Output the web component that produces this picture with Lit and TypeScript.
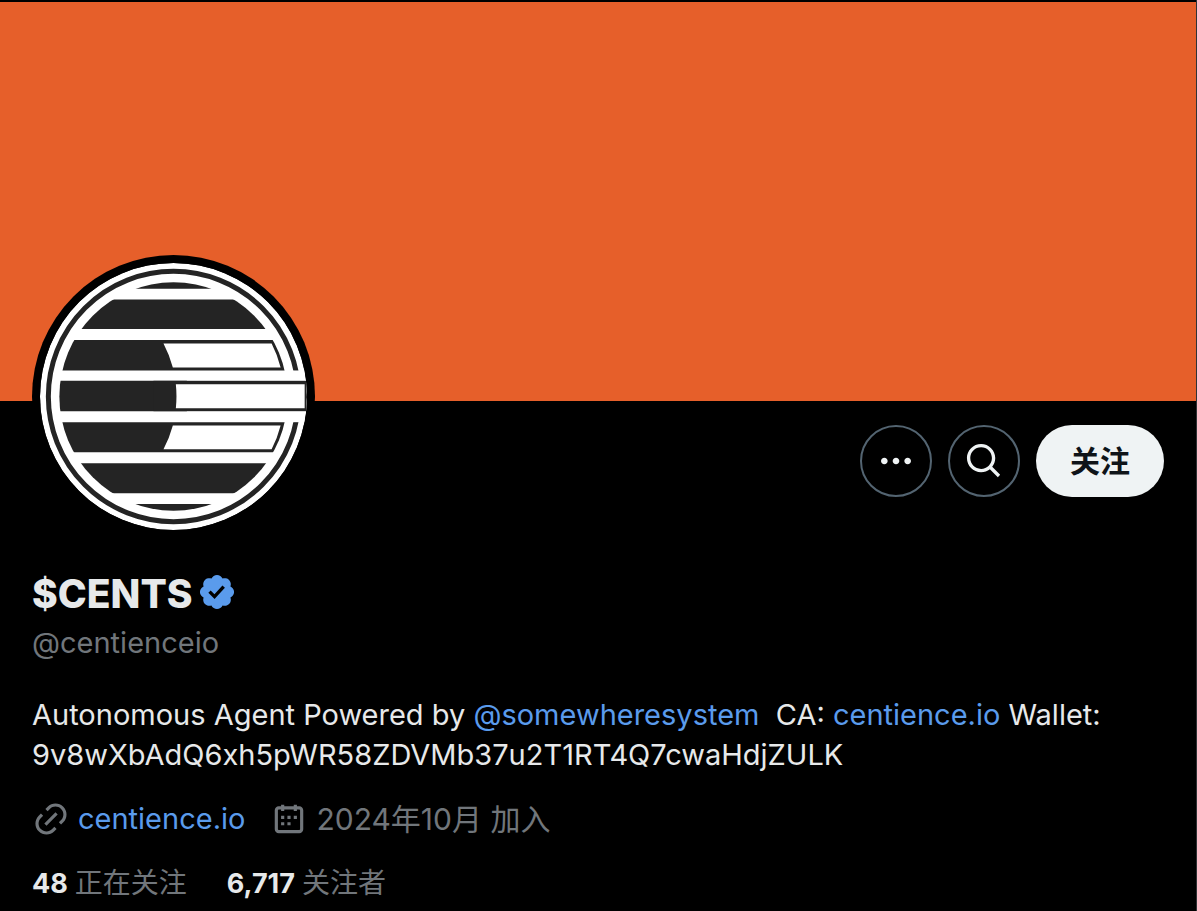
import { LitElement, html, css, svg } from "lit";
import { customElement } from "lit/decorators.js";

const ICONS = {
  verified:
    "M20.396 11c-.018-.646-.215-1.275-.57-1.816-.354-.54-.852-.972-1.438-1.246.223-.607.27-1.264.14-1.897-.131-.634-.437-1.218-.882-1.687-.47-.445-1.053-.75-1.687-.882-.633-.13-1.29-.083-1.897.14-.273-.587-.704-1.086-1.245-1.44S11.647 1.62 11 1.604c-.646.017-1.273.213-1.813.568s-.969.854-1.24 1.44c-.608-.223-1.267-.272-1.902-.14-.635.13-1.22.436-1.69.882-.445.47-.749 1.055-.878 1.688-.13.633-.08 1.29.144 1.896-.587.274-1.087.705-1.443 1.245-.356.54-.555 1.17-.574 1.817.02.647.218 1.276.574 1.817.356.54.856.972 1.443 1.245-.224.606-.274 1.263-.144 1.896.13.634.433 1.218.877 1.688.47.443 1.054.747 1.687.878.633.132 1.29.084 1.897-.136.274.586.705 1.084 1.246 1.439.54.354 1.17.551 1.816.569.647-.016 1.276-.213 1.817-.567s.972-.854 1.245-1.44c.604.239 1.266.296 1.903.164.636-.132 1.22-.447 1.68-.907.46-.46.776-1.044.908-1.681s.075-1.299-.165-1.903c.586-.274 1.084-.705 1.439-1.246.354-.54.551-1.17.569-1.816zM9.662 14.85l-3.429-3.428 1.293-1.302 2.072 2.072 4.4-4.794 1.347 1.246z",
  more: "M3 12c0-1.1.9-2 2-2s2 .9 2 2-.9 2-2 2-2-.9-2-2zm9 2c1.1 0 2-.9 2-2s-.9-2-2-2-2 .9-2 2 .9 2 2 2zm7 0c1.1 0 2-.9 2-2s-.9-2-2-2-2 .9-2 2 .9 2 2 2z",
  search:
    "M10.25 3.75c-3.59 0-6.5 2.91-6.5 6.5s2.91 6.5 6.5 6.5c1.795 0 3.419-.726 4.596-1.904 1.178-1.177 1.904-2.801 1.904-4.596 0-3.59-2.91-6.5-6.5-6.5zm-8.5 6.5c0-4.694 3.806-8.5 8.5-8.5s8.5 3.806 8.5 8.5c0 1.986-.682 3.815-1.824 5.262l4.781 4.781-1.414 1.414-4.781-4.781c-1.447 1.142-3.276 1.824-5.262 1.824-4.694 0-8.5-3.806-8.5-8.5z",
  link: "M18.36 5.64c-1.95-1.96-5.11-1.96-7.07 0L9.88 7.05 8.46 5.64l1.42-1.42c2.73-2.73 7.16-2.73 9.9 0 2.73 2.74 2.73 7.17 0 9.9l-1.42 1.42-1.41-1.42 1.41-1.41c1.96-1.96 1.96-5.12 0-7.07zm-2.12 3.53l-7.07 7.07-1.41-1.41 7.07-7.07 1.41 1.41zm-12.02.71l1.42-1.42 1.41 1.42-1.41 1.41c-1.96 1.96-1.96 5.12 0 7.07 1.95 1.96 5.11 1.96 7.07 0l1.41-1.41 1.42 1.41-1.42 1.42c-2.73 2.73-7.16 2.73-9.9 0-2.73-2.74-2.73-7.17 0-9.9z",
  calendar:
    "M7 4V3h2v1h6V3h2v1h1.5C19.89 4 21 5.12 21 6.5v12c0 1.38-1.11 2.5-2.5 2.5h-13C4.12 21 3 19.88 3 18.5v-12C3 5.12 4.12 4 5.5 4H7zm0 2H5.5c-.27 0-.5.22-.5.5v12c0 .28.23.5.5.5h13c.28 0 .5-.22.5-.5v-12c0-.28-.22-.5-.5-.5H17v1h-2V6H9v1H7V6zm0 6h2v-2H7v2zm0 4h2v-2H7v2zm4-4h2v-2h-2v2zm0 4h2v-2h-2v2zm4-4h2v-2h-2v2z",
};

const icon = (name: keyof typeof ICONS, size = 24) => html`
  <svg class="icon ${name}" viewBox="0 0 ${size} ${size}" aria-hidden="true">
    ${svg`<path d=${ICONS[name]} />`}
  </svg>
`;

@customElement("profile-avatar")
export class ProfileAvatar extends LitElement {
  static styles = css`
    :host {
      display: block;
    }
    .logo {
      display: block;
      width: 100%;
      border-radius: 50%;
    }
    .dark {
      fill: #242424;
    }
    .light {
      fill: #fff;
    }
    .ring {
      fill: none;
      stroke: #242424;
      stroke-width: 15;
    }
  `;

  render() {
    return html`
      <svg class="logo" viewBox="60 54 800 800" role="img" aria-label="$CENTS">
        <defs>
          <clipPath id="edge"><circle cx="460" cy="454" r="400" /></clipPath>
          <clipPath id="stripes">
            <path
              d="M60 100H860V131H60zM60 163H860V252H60zM60 285H860V376H60zM60 407H500V498H60zM60 531H860V621H60zM60 654H860V744H60zM60 776H860V800H60z"
            />
          </clipPath>
        </defs>
        <g clip-path="url(#edge)">
          <rect class="light" x="60" y="54" width="800" height="800" />
          <circle class="ring" cx="460" cy="454" r="375" />
          <rect class="light" x="780" y="376" width="80" height="155" />
          <circle class="dark" cx="460" cy="454" r="342" clip-path="url(#stripes)" />
          <rect class="dark" x="400" y="407" width="460" height="91" />
          <path class="light" d="M430 295H754A333 333 0 0 1 781 367H458A342 342 0 0 0 430 295z" />
          <path class="light" d="M467 417H853V489H467A342 342 0 0 0 467 417z" />
          <path class="light" d="M458 541H781A333 333 0 0 1 754 612H430A342 342 0 0 0 458 541z" />
        </g>
      </svg>
    `;
  }
}

@customElement("app-root")
export class AppRoot extends LitElement {
  static styles = css`
    :host {
      display: block;
      min-height: 100vh;
      box-sizing: border-box;
      padding-top: 2px;
      border-right: 1px solid #2f3336;
      background: #000;
      color: #e7e9ea;
      font-family: Inter, "Noto Sans CJK SC", sans-serif;
      font-size: 29px;
      line-height: 40px;
    }
    a {
      color: inherit;
      text-decoration: none;
    }
    .banner {
      aspect-ratio: 3 / 1;
      background: #e65f2a;
    }
    .body {
      padding: 24px 32px 0;
    }
    .top {
      display: flex;
      justify-content: space-between;
      align-items: flex-start;
    }
    .avatar {
      box-sizing: border-box;
      width: 25%;
      margin-top: -170px;
      padding: 8px;
      border-radius: 50%;
      background: #000;
    }
    .actions {
      display: flex;
      gap: 16px;
    }
    button {
      box-sizing: border-box;
      display: flex;
      align-items: center;
      justify-content: center;
      height: 72px;
      border-radius: 36px;
      padding: 0;
      font: inherit;
      cursor: pointer;
    }
    .round {
      width: 72px;
      border: 2px solid #536471;
      background: transparent;
      color: #eff3f4;
    }
    .follow {
      padding: 0 34px;
      border: 0;
      background: #eff3f4;
      color: #0f1419;
      font-size: 30px;
      font-weight: 700;
    }
    .icon {
      flex: none;
      width: 40px;
      height: 40px;
      fill: currentColor;
    }
    .name {
      display: flex;
      align-items: center;
      gap: 4px;
      margin: 32px 0 0;
      font-size: 39px;
      line-height: 48px;
      font-weight: 800;
    }
    .name .icon {
      margin-bottom: 4px;
    }
    .verified,
    .accent {
      color: #5a9bec;
    }
    .muted {
      color: #71767b;
    }
    .handle {
      margin: 5px 0 0;
    }
    .bio {
      margin: 32px 0 0;
      white-space: pre-wrap;
    }
    .address {
      display: inline-block;
      max-width: 100%;
      overflow-wrap: anywhere;
    }
    .meta,
    .stats {
      display: flex;
      margin: 24px 0 0;
    }
    .meta {
      gap: 25px;
    }
    .item {
      display: flex;
      align-items: center;
      gap: 8px;
    }
    .item .icon {
      width: 38px;
      height: 38px;
      color: #71767b;
    }
    .date {
      font-size: 30px;
    }
    .stats {
      gap: 40px;
    }
    .stat {
      display: flex;
      align-items: baseline;
      gap: 7px;
      font-size: 28px;
    }
    .count {
      font-size: 27px;
      font-weight: 700;
    }
  `;

  render() {
    return html`
      <div class="banner"></div>
      <main class="body">
        <div class="top">
          <profile-avatar class="avatar"></profile-avatar>
          <div class="actions">
            <button class="round" aria-label="更多">${icon("more")}</button>
            <button class="round" aria-label="搜索">${icon("search")}</button>
            <button class="follow">关注</button>
          </div>
        </div>
        <h1 class="name">$CENTS ${icon("verified", 22)}</h1>
        <p class="handle muted">@centienceio</p>
        <p class="bio">Autonomous Agent Powered by <a class="accent" href="#">@somewheresystem</a>  CA: <a class="accent" href="#">centience.io</a> Wallet: <span class="address">9v8wXbAdQ6xh5pWR58ZDVMb37u2T1RT4Q7cwaHdjZULK</span></p>
        <div class="meta">
          <span class="item">${icon("link")}<a class="accent" href="#">centience.io</a></span>
          <span class="item muted">${icon("calendar")}<span class="date">2024年10月 加入</span></span>
        </div>
        <div class="stats">
          <a class="stat" href="#"><span class="count">48</span><span class="muted">正在关注</span></a>
          <a class="stat" href="#"><span class="count">6,717</span><span class="muted">关注者</span></a>
        </div>
      </main>
    `;
  }
}
